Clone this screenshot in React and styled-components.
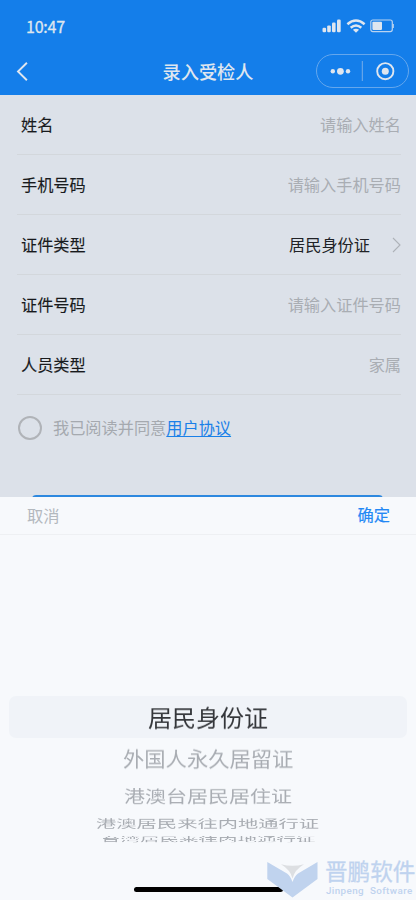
import React, { useState } from 'react'
import styled, { createGlobalStyle } from 'styled-components'

const GlobalStyle = createGlobalStyle`
    * {
        box-sizing: border-box;
    }

    body {
        margin: 0;
        background: #f7f9fc;
        font-family: 'Noto Sans CJK SC', 'Noto Sans', sans-serif;
    }
`

const fields = [
    { label: '姓名', placeholder: '请输入姓名' },
    { label: '手机号码', placeholder: '请输入手机号码' },
    { label: '证件类型', value: '居民身份证' },
    { label: '证件号码', placeholder: '请输入证件号码' },
    { label: '人员类型', placeholder: '家属' },
]

// the wheel flattens the options the further they are from the selection
const options = [
    { text: '居民身份证', size: 24, height: 42, squash: 0.97, active: true },
    { text: '外国人永久居留证', size: 21.3, height: 40, squash: 0.93 },
    { text: '港澳台居民居住证', size: 21, height: 33, squash: 0.78 },
    { text: '港澳居民来往内地通行证', size: 20.3, height: 23, squash: 0.56 },
    { text: '台湾居民来往内地通行证', size: 19.5, height: 10, squash: 0.34 },
]

const SignalIcon = () => (
    <svg width="20" height="14" viewBox="0 0 20 14" fill="#dfe6ef">
        <rect x="0.5" y="8.7" width="3.6" height="4.6" rx="1.2" />
        <rect x="5.2" y="6.4" width="3.6" height="6.9" rx="1.2" />
        <rect x="10" y="3.5" width="3.6" height="9.8" rx="1.2" />
        <rect x="15" y="0.6" width="3.7" height="12.7" rx="1.2" />
    </svg>
)

const WifiIcon = () => (
    <svg width="20" height="14" viewBox="0 0 20 14" fill="none">
        <g stroke="#dfe6ef" strokeWidth="2.5">
            <path d="M1.4 5.2Q10 -2.2 18.6 5.2" />
            <path d="M4.7 8.8Q10 4.2 15.3 8.8" />
        </g>
        <path d="M6.9 10.8Q10 8.6 13.1 10.8L10 13.8Z" fill="#dfe6ef" />
    </svg>
)

const BatteryIcon = () => (
    <svg width="24" height="14" viewBox="0 0 24 14" fill="none">
        <rect x="0.8" y="1" width="21.5" height="11.6" rx="2" stroke="#b9d3f0" strokeWidth="1.2" />
        <rect x="2.4" y="2.7" width="9.6" height="8.2" rx="0.8" fill="#dfe6ef" />
        <path d="M23.2 5v4" stroke="#b9d3f0" strokeWidth="1.3" />
    </svg>
)

const BackIcon = () => (
    <svg width="12" height="20" viewBox="0 0 12 20" fill="none">
        <path d="M10.9 1.7L2 10.5L10.9 19.3" stroke="#dfe6ef" strokeWidth="1.9" />
    </svg>
)

const ArrowIcon = () => (
    <svg width="9" height="16" viewBox="0 0 9 16" fill="none">
        <path d="M1 1L8 8L1 15" stroke="#aeb2b8" strokeWidth="1.1" />
    </svg>
)

const CapsuleIcon = () => (
    <svg width="93" height="34" viewBox="0 0 93 34" fill="none">
        <rect x="0.5" y="0.5" width="92" height="33" rx="16.5" stroke="#65a7ed" />
        <g fill="#dfe6ef">
            <circle cx="16.8" cy="17.3" r="2.2" />
            <circle cx="24.4" cy="17.3" r="3.4" />
            <circle cx="32" cy="17.3" r="2.2" />
            <circle cx="69.3" cy="17.2" r="3.5" />
        </g>
        <path d="M46.3 7v20" stroke="#78aee9" />
        <circle cx="69.3" cy="17.2" r="8.1" stroke="#dfe6ef" strokeWidth="1.9" />
    </svg>
)

const LogoIcon = () => (
    <svg width="51" height="37" viewBox="0 0 51 37">
        <path d="M0.3 1L20 12.5Q23.5 15 25.5 21Q27.5 15 31 12.5L50.5 1V18L25.5 36.5L0.3 18Z" fill="#c0d3ee" />
        <path d="M14 3.3Q25.5 6.4 37 3.3Q27.5 9 25.5 17.5Q23.5 9 14 3.3Z" fill="#dddfe2" />
    </svg>
)

const App = () => {
    const [agreed, setAgreed] = useState(false)

    return (
        <Screen>
            <GlobalStyle />
            <Header>
                <StatusBar>
                    <Time>10:47</Time>
                    <StatusIcons>
                        <SignalIcon />
                        <WifiIcon />
                        <BatteryIcon />
                    </StatusIcons>
                </StatusBar>
                <NavBar>
                    <NavSide>
                        <BackIcon />
                    </NavSide>
                    <Title>录入受检人</Title>
                    <NavSide $end>
                        <CapsuleIcon />
                    </NavSide>
                </NavBar>
            </Header>

            <Form>
                {fields.map(({ label, placeholder, value }) => (
                    <Field key={label}>
                        <Label>{label}</Label>
                        <Value $filled={!!value}>{value || placeholder}</Value>
                        {value && <ArrowIcon />}
                    </Field>
                ))}
                <Agreement>
                    <Radio $checked={agreed} onClick={() => setAgreed(!agreed)} />
                    <AgreementText>
                        我已阅读并同意<Link>用户协议</Link>
                    </AgreementText>
                </Agreement>
                <SubmitButton />
            </Form>

            <Sheet>
                <SheetBar>
                    <Cancel>取消</Cancel>
                    <Confirm>确定</Confirm>
                </SheetBar>
                <Wheel>
                    {options.map(({ text, size, height, squash, active }) => (
                        <Option key={text} $size={size} $height={height} $active={active}>
                            <OptionText $squash={squash}>{text}</OptionText>
                        </Option>
                    ))}
                </Wheel>
                <HomeIndicator />
                <Watermark>
                    <LogoIcon />
                    <Brand>
                        <BrandName>晋鹏软件</BrandName>
                        <BrandSub>
                            <span>Jinpeng</span>
                            <span>Software</span>
                        </BrandSub>
                    </Brand>
                </Watermark>
            </Sheet>
        </Screen>
    )
}

const Screen = styled.div`
    position: relative;
    display: flex;
    flex-direction: column;
    width: 416px;
    height: 900px;
    overflow: hidden;
`

const Header = styled.header`
    height: 95px;
    flex: none;
    background: #147eea;
    color: #dfe6ef;
`

const StatusBar = styled.div`
    display: flex;
    align-items: center;
    justify-content: space-between;
    height: 52px;
    padding: 0 22px 0 26px;
`

const Time = styled.span`
    font-size: 16px;
    font-weight: 400;
    line-height: 20px;
    letter-spacing: -0.2px;
    -webkit-text-stroke: 0.3px;
`

const StatusIcons = styled.div`
    display: flex;
    align-items: center;
    gap: 4px;
`

const NavBar = styled.div`
    display: grid;
    grid-template-columns: 1fr auto 1fr;
    align-items: center;
    height: 38px;
    padding: 0 7px 0 16px;
`

const NavSide = styled.div`
    display: flex;
    justify-content: ${({ $end }) => ($end ? 'flex-end' : 'flex-start')};
`

const Title = styled.h1`
    margin: 0 9px 0 0;
    font-size: 18.2px;
    font-weight: 500;
    line-height: 26px;
`

const Form = styled.main`
    display: flex;
    flex-direction: column;
    height: 402px;
    flex: none;
    padding: 0 15px 0 17px;
    overflow: hidden;
    background: #dce1e9;
`

const Field = styled.div`
    display: flex;
    align-items: center;
    flex: none;
    height: 60px;
    padding-left: 4px;
    border-bottom: 1px solid #d3d7dc;
    font-size: 16.2px;
    line-height: 24px;
`

const Label = styled.span`
    flex: 1;
    padding-bottom: 1px;
    color: #181a1d;
    -webkit-text-stroke: 0.12px;
`

const Value = styled.span`
    padding-bottom: 1px;
    color: ${({ $filled }) => ($filled ? '#202226' : '#a9adb3')};

    & + svg {
        margin-left: 22px;
    }
`

const Agreement = styled.div`
    display: flex;
    align-items: center;
    flex: none;
    gap: 11px;
    height: 66px;
    padding-left: 1px;
    color: #a5a9af;
    font-size: 16.2px;
    line-height: 24px;
`

const AgreementText = styled.span`
    padding-bottom: 2px;
`

const Radio = styled.button`
    width: 24px;
    height: 24px;
    padding: 0;
    border: 2px solid #b0b3b8;
    border-radius: 50%;
    background: ${({ $checked }) => ($checked ? '#147eea' : 'transparent')};
`

const Link = styled.a`
    color: #1a80e8;
    text-decoration: underline;
    text-decoration-thickness: 1px;
    text-underline-offset: 2px;
`

const SubmitButton = styled.button`
    flex: none;
    height: 46px;
    margin: 34px 18px 0 15px;
    border: 0;
    border-radius: 4px;
    background: #2d88df;
`

const Sheet = styled.section`
    position: relative;
    display: flex;
    flex-direction: column;
    flex: 1;
    background: #f7f9fc;
`

const SheetBar = styled.div`
    display: flex;
    justify-content: space-between;
    height: 38px;
    padding: 0 26px 0 27px;
    border-bottom: 1px solid #eef0f3;
    font-size: 16.3px;
    line-height: 24px;
`

const Cancel = styled.span`
    padding-top: 6px;
    color: #b3b8be;
`

const Confirm = styled.span`
    padding-top: 5px;
    color: #2388f5;
    -webkit-text-stroke: 0.15px;
`

const Wheel = styled.div`
    display: flex;
    flex-direction: column;
    height: 313px;
    flex: none;
    padding: 161px 9px 0;
`

const Option = styled.div`
    display: flex;
    align-items: center;
    justify-content: center;
    flex: none;
    height: ${({ $height }) => $height}px;
    border-radius: 7px;
    background: ${({ $active }) => ($active ? '#f0f3f8' : 'transparent')};
    color: ${({ $active }) => ($active ? '#34363a' : '#a9adb3')};
    font-size: ${({ $size }) => $size}px;
`

const OptionText = styled.span`
    line-height: 30px;
    transform: scaleY(${({ $squash }) => $squash});
    will-change: transform;
`

const HomeIndicator = styled.div`
    position: absolute;
    left: 134px;
    bottom: 8px;
    width: 149px;
    height: 5px;
    border-radius: 3px;
    background: #000;
`

const Watermark = styled.div`
    position: absolute;
    right: 0;
    bottom: 2px;
    display: flex;
    gap: 7px;
    width: 149px;
    height: 37px;
    color: #bfd3ef;
    white-space: nowrap;

    svg {
        flex: none;
    }
`

const Brand = styled.div`
    display: flex;
    flex-direction: column;
`

const BrandName = styled.span`
    font-size: 22.6px;
    line-height: 20px;
    -webkit-text-stroke: 0.3px;
`

const BrandSub = styled.span`
    display: flex;
    gap: 6px;
    padding: 3px 0 0 1px;
    font-family: Roboto, sans-serif;
    font-size: 9.8px;
    font-weight: 500;
    line-height: 14px;
    letter-spacing: 0.4px;
`

export default App
